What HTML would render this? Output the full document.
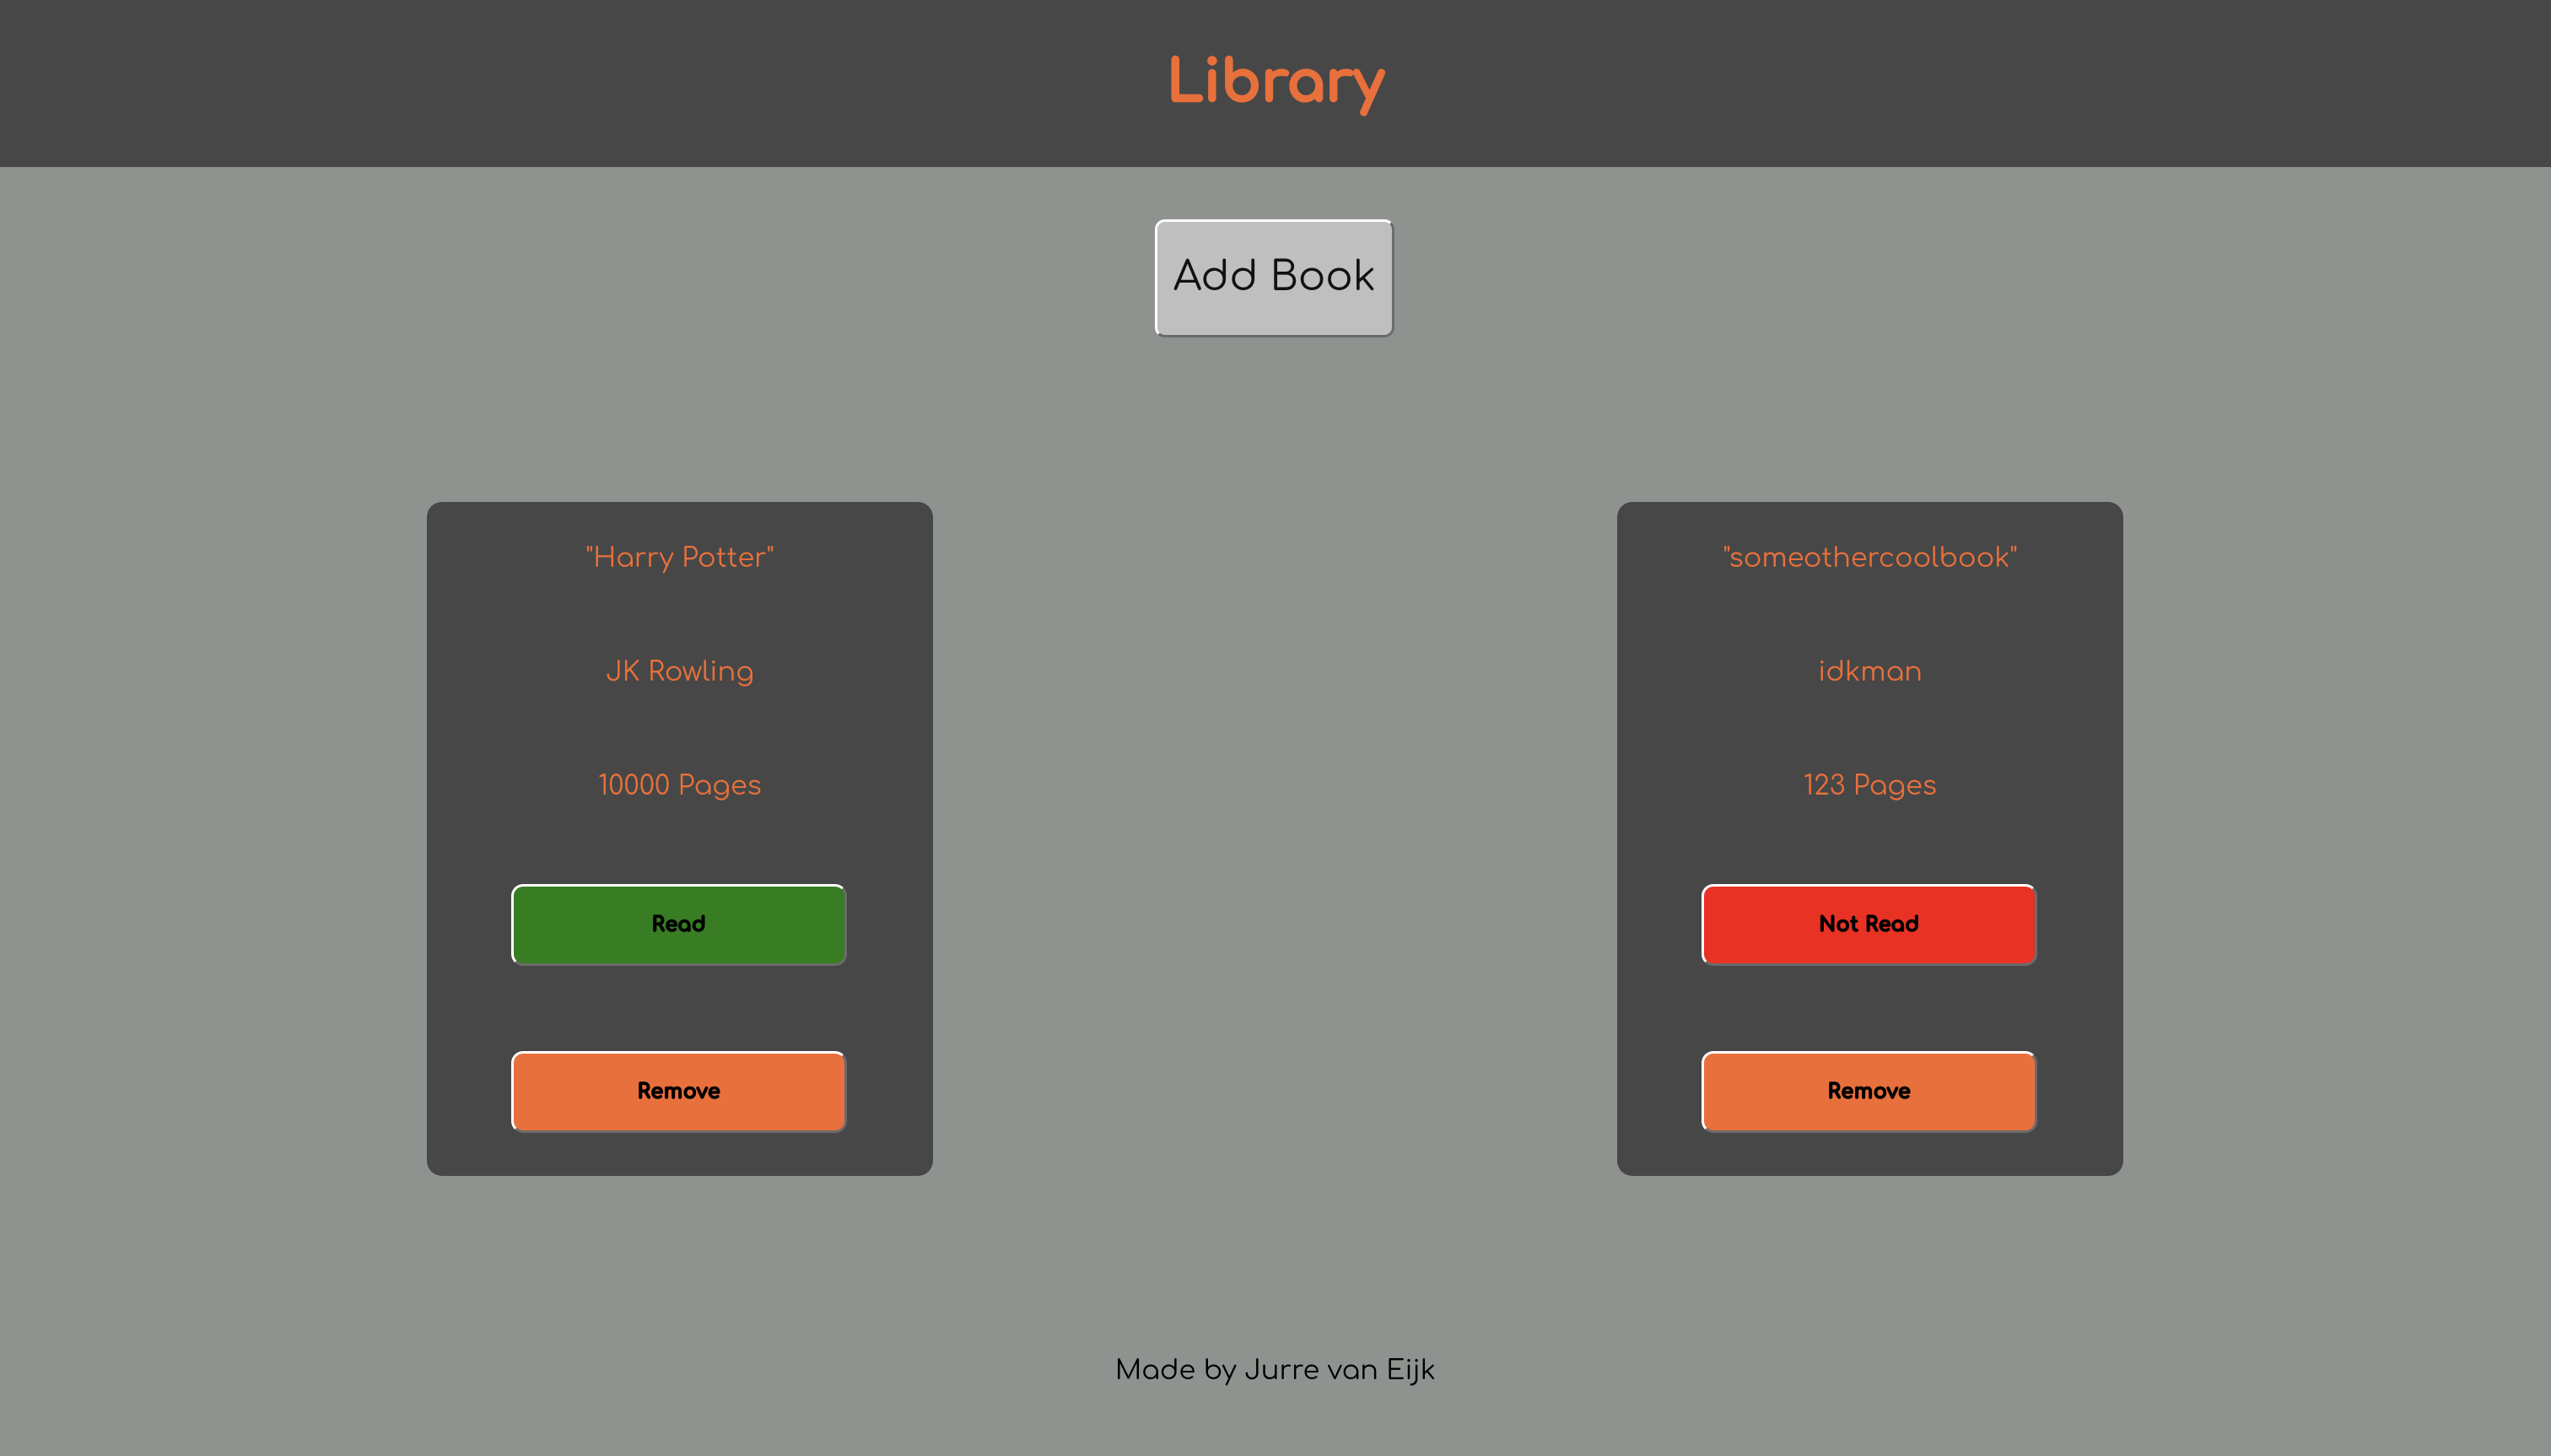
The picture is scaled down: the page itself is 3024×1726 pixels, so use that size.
<!DOCTYPE html>
<html><head><style>
*{margin:0;padding:0;box-sizing:border-box}
body{width:3024px;height:1726px;background:#8f938f;font-family:"Comfortaa","Liberation Sans",sans-serif;position:relative;overflow:hidden}
.hdr{position:absolute;left:0;top:0;width:3024px;height:198px;background:#474747}
.t{position:absolute;width:100%;text-align:center}
.card{position:absolute;top:595px;width:600px;height:799px;background:#474747;border-radius:18px}
.card .l{position:absolute;width:100%;text-align:center;color:#e8703c;font-size:32px;line-height:40px}
.btn{position:absolute;left:100px;width:398px;height:97px;border:3px solid;border-color:#fff #6b6b6b #6b6b6b #fff;border-radius:14px;text-align:center;line-height:91px;font-weight:bold;font-size:24px;color:#000;letter-spacing:0.5px;-webkit-text-stroke:1.6px #000}
</style></head><body>
<div class="hdr"></div>
<div class="t" style="top:58px;font-size:68px;line-height:80px;color:#e8703c;font-weight:bold;-webkit-text-stroke:2.5px #e8703c">Library</div>
<div style="position:absolute;left:1369px;top:260px;width:284px;height:140px;background:#bfbfbf;border:3px solid;border-color:#fff #6b6b6b #6b6b6b #fff;border-radius:12px;text-align:center;line-height:134px;font-size:48px;color:#111">Add Book</div>

<div class="card" style="left:506px">
<div class="l" style="top:48px">"Harry Potter"</div>
<div class="l" style="top:183px">JK Rowling</div>
<div class="l" style="top:318px">10000 Pages</div>
<div class="btn" style="top:453px;background:#387d23">Read</div>
<div class="btn" style="top:651px;background:#e8703c">Remove</div>
</div>

<div class="card" style="left:1917px">
<div class="l" style="top:48px">"someothercoolbook"</div>
<div class="l" style="top:183px">idkman</div>
<div class="l" style="top:318px">123 Pages</div>
<div class="btn" style="top:453px;background:#e83324">Not Read</div>
<div class="btn" style="top:651px;background:#e8703c">Remove</div>
</div>

<div class="t" style="top:1604px;font-size:32px;line-height:44px;color:#000">Made by Jurre van Eijk</div>
</body></html>
